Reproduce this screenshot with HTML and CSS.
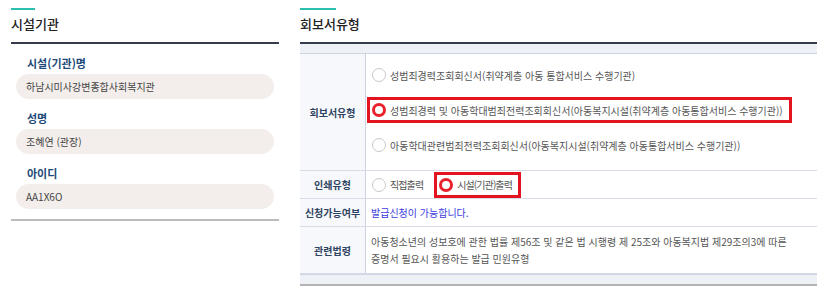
FILE: index.html
```html
<!DOCTYPE html>
<html lang="ko">
<head>
  <meta charset="UTF-8">
  <title>회보서 신청</title>
  <link rel="stylesheet" href="styles.css">
</head>
<body>
  <div class="wrap">
    <section class="facility">
      <h2 class="title">시설기관</h2>
      <div class="fields">
        <p class="label">시설(기관)명</p>
        <div class="pill">하남시미사강변종합사회복지관</div>
        <p class="label">성명</p>
        <div class="pill">조혜연 (관장)</div>
        <p class="label">아이디</p>
        <div class="pill">AA1X6O</div>
      </div>
    </section>

    <section class="report">
      <h2 class="title wide">회보서유형</h2>
      <div class="grid">
        <div class="strip"></div>

        <div class="head">회보서유형</div>
        <div class="cell options">
          <label class="opt"><span class="radio"></span>성범죄경력조회회신서(취약계층 아동 통합서비스 수행기관)</label>
          <label class="opt mark"><span class="radio on"></span>성범죄경력 및 아동학대범죄전력조회회신서(아동복지시설(취약계층 아동통합서비스 수행기관))</label>
          <label class="opt"><span class="radio"></span>아동학대관련범죄전력조회회신서(아동복지시설(취약계층 아동통합서비스 수행기관))</label>
        </div>

        <div class="head">인쇄유형</div>
        <div class="cell inline">
          <label class="opt"><span class="radio"></span>직접출력</label>
          <label class="opt mark"><span class="radio on"></span>시설(기관)출력</label>
        </div>

        <div class="head">신청가능여부</div>
        <div class="cell"><span class="ok">발급신청이 가능합니다.</span></div>

        <div class="head">관련법령</div>
        <div class="cell law">아동청소년의 성보호에 관한 법률 제56조 및 같은 법 시행령 제 25조와 아동복지법 제29조의3에 따른<br>증명서 필요시 활용하는 발급 민원유형</div>

        <div class="strip foot"></div>
      </div>
    </section>
  </div>
</body>
</html>
```

FILE: styles.css
```css
html {
  font-family: "Noto Sans CJK KR", "Noto Sans", sans-serif;
}

body {
  margin: 0;
  background-color: #fff;
  color: #555;
}

.wrap {
  display: flex;
  gap: 21px;
  padding: 8px 18px 0 11px;
}

/* section titles with the teal mark */
.title {
  margin: 0;
  padding: 5px 0 8px;
  font-size: 13px;
  line-height: 21px;
  font-weight: 500;
  color: #222;
  border-bottom: 2px solid #363c4c;
  position: relative;
}

.title::before {
  content: "";
  position: absolute;
  top: 0;
  left: 0;
  width: 24px;
  height: 2px;
  background-color: #2cbfae;
}

.title.wide::before {
  width: 36px;
}

/* left side */
.facility {
  width: 268px;
}

.fields {
  padding: 0 5px 10px;
  border-bottom: 2px solid #bcbcbc;
}

.label {
  margin: 0;
  padding: 8px 0 0 11px;
  height: 22px;
  line-height: 22px;
  font-size: 11px;
  font-weight: 700;
  color: #1d4a78;
}

.pill {
  height: 25px;
  line-height: 25px;
  padding-left: 10px;
  border-radius: 13px;
  background-color: #f3eeeb;
  font-size: 10px;
  color: #444;
}

/* right side */
.report {
  flex: 1;
}

.grid {
  display: grid;
  grid-template-columns: 66px 1fr;
  border-bottom: 2px solid #b3b3b3;
}

.strip {
  grid-column: 1 / 3;
  height: 9px;
  background-color: #eef1f6;
  border-bottom: 1px solid #cdd3e2;
}

.strip.foot {
  border-bottom: 0;
  border-top: 1px solid #cdd3e2;
}

.head {
  display: flex;
  align-items: center;
  justify-content: center;
  background-color: #f7f8fb;
  border-right: 1px solid #cdd3e2;
  border-bottom: 1px solid #d7dce7;
  font-size: 10px;
  font-weight: 700;
  color: #2e4462;
}

.cell {
  display: flex;
  align-items: center;
  padding-left: 5px;
  min-height: 27px;
  border-bottom: 1px solid #d7dce7;
  font-size: 10px;
}

.cell.options {
  flex-direction: column;
  align-items: flex-start;
  gap: 9px;
  padding: 8px 0 12px 1px;
}

.cell.inline {
  gap: 2px;
  padding-left: 1px;
  letter-spacing: -0.9px;
}

.opt {
  display: inline-flex;
  align-items: center;
  gap: 4px;
  height: 20px;
  padding: 0 6px 0 2px;
  border: 3px solid transparent;
}

.opt.mark {
  border-color: #e3131f;
}

.radio {
  width: 12px;
  height: 12px;
  border: 1px solid #c9c9c9;
  border-radius: 50%;
  background-color: #fff;
}

.radio.on {
  width: 8px;
  height: 8px;
  border: 3px solid #e8212c;
}

.ok {
  color: #3b3be0;
}

.cell.law {
  display: block;
  padding: 6px 0 6px 5px;
  line-height: 17px;
}
```
